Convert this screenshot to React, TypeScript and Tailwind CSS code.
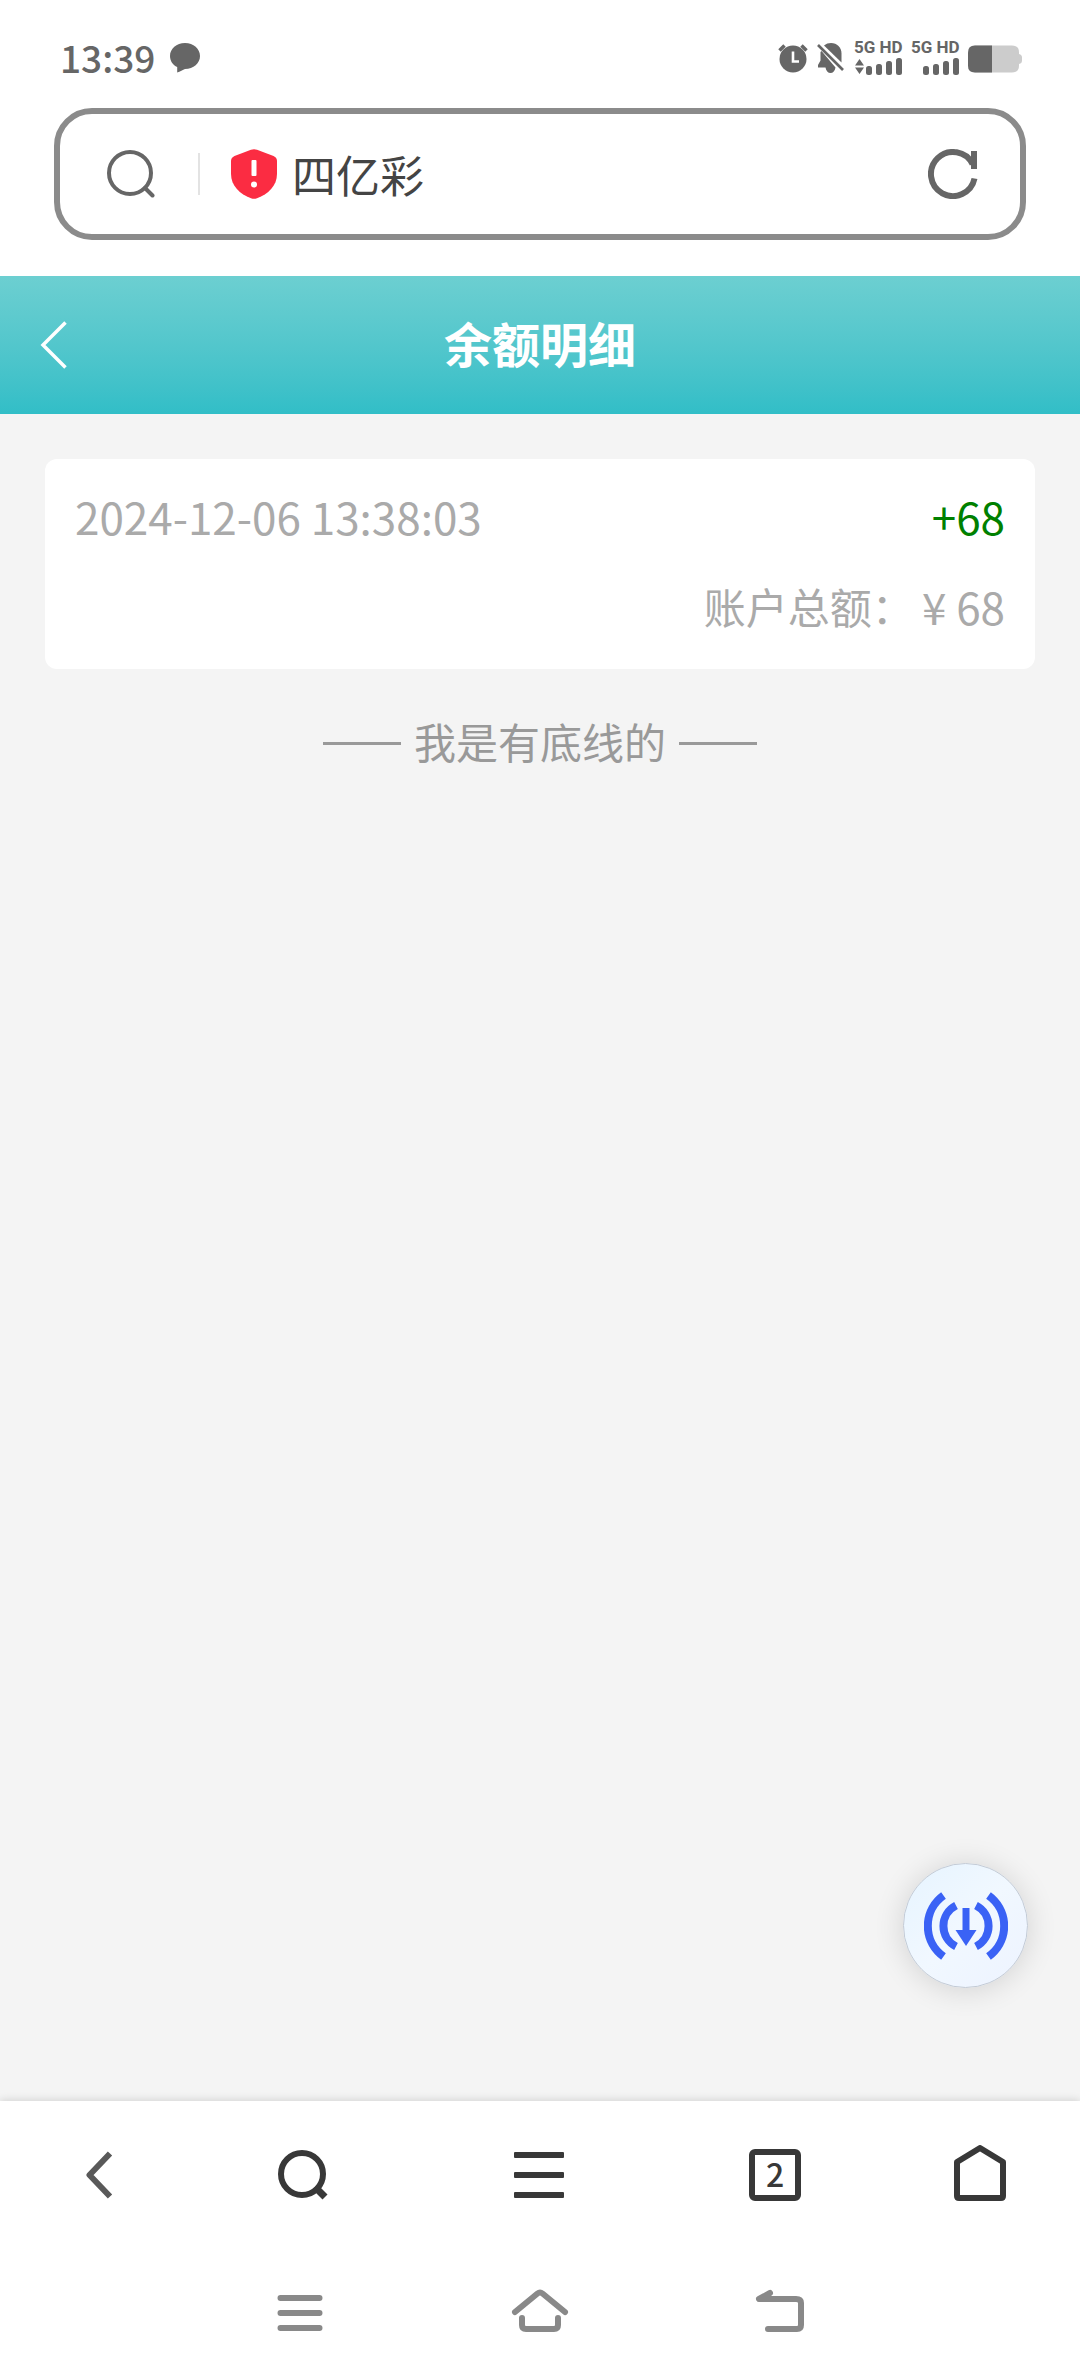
import type { ReactNode } from "react";

interface BalanceRecord {
  id: string;
  createdAt: string;
  amount: number;
  total: number;
}

const RECORDS: BalanceRecord[] = [
  { id: "1", createdAt: "2024-12-06 13:38:03", amount: 68, total: 68 },
];

export default function App() {
  return (
    <div
      lang="zh-CN"
      className="flex min-h-screen flex-col bg-white font-['Noto_Sans_CJK_SC',sans-serif]"
    >
      <StatusBar />
      <AddressBar title="四亿彩" />
      <PageHeader title="余额明细" />

      <main className="relative flex-1 bg-[#f4f4f4] px-[45px] pt-[45px]">
        <ul className="space-y-6">
          {RECORDS.map((r) => (
            <RecordCard key={r.id} record={r} />
          ))}
        </ul>
        <div className="mt-10 flex items-center justify-center gap-[13px] text-[42px] leading-[64px] text-[#999]">
          <span className="h-[3px] w-[78px] bg-[#999]" />
          <p className="pb-1">我是有底线的</p>
          <span className="h-[3px] w-[78px] bg-[#999]" />
        </div>
        <FloatingButton />
      </main>

      <BrowserToolbar tabs={2} />
      <SystemNav />
    </div>
  );
}

function StatusBar() {
  return (
    <div className="flex h-[108px] items-center justify-between pt-2 pr-[58px] pl-[60px] text-[#666]">
      <div className="flex items-center gap-[15px]">
        <span className="pb-0.5 text-[37px] leading-none font-medium">13:39</span>
        <svg className="h-[30px] w-[30px]" viewBox="0 0 30 30" fill="currentColor">
          <path d="M15 0C23.500 0 30 5.700 30 13C30 20.300 23.500 26 15 26C13 27 10 28.500 7.200 29.500V24C3 22 0 18 0 13C0 5.700 6.500 0 15 0Z" />
        </svg>
      </div>

      <div className="flex items-center gap-[9px]">
        <svg className="h-[30px] w-[30px]" viewBox="0 0 30 30" fill="currentColor">
          <circle cx="15" cy="16" r="13.500" />
          <path d="M1.500 7.500L6.500 2.500M28.500 7.500L23.500 2.500" stroke="currentColor" strokeWidth="3.500" fill="none" />
          <path d="M15 8.500V18.500H21" stroke="#fff" strokeWidth="2.600" fill="none" />
        </svg>
        <svg className="h-[30px] w-[28px]" viewBox="0 0 28 30" fill="currentColor">
          <path d="M7 2.500C9 .8 11.500 0 14 0C20 0 24.500 4.500 24.500 10.500V19.500Z" />
          <path d="M3.500 9V17.500L1 22V24.500H8.500C9 28 11 30 13.500 30C16 30 18 28 18.500 24.500L4.500 8Z" />
          <path d="M1 2L26 27" stroke="currentColor" strokeWidth="2.600" />
        </svg>
        <Signal arrows />
        <Signal />
        <svg className="h-[30px] w-[54px]" viewBox="0 -2.500 54 30">
          <path d="M7 0H44Q51 0 51 7V8.500Q54 9 54 12V15Q54 18 51 18.500V20Q51 27 44 27H7Q0 27 0 20V7Q0 0 7 0Z" fill="#ccc" />
          <path d="M24 0H7Q0 0 0 7V20Q0 27 7 27H24Z" fill="#666" />
        </svg>
      </div>
    </div>
  );
}

function Signal({ arrows }: { arrows?: boolean }) {
  return (
    <div className="flex w-[48px] flex-col gap-[3px] pb-0.5">
      <span className="font-[Roboto,sans-serif] text-[17px] leading-[15px] font-bold whitespace-nowrap">5G HD</span>
      <svg className="h-[17px] w-[48px]" viewBox="0 0 48 17" fill="currentColor">
        {arrows && <path d="M5.500 1L10 7.500H1ZM5.500 16L10 9.500H1Z" />}
        <rect x="12" y="8" width="6" height="9" rx="2.500" />
        <rect x="22" y="6" width="6" height="11" rx="2.500" />
        <rect x="32" y="3" width="6" height="14" rx="2.500" />
        <rect x="42" y="0" width="6" height="17" rx="2.500" />
      </svg>
    </div>
  );
}

function AddressBar({ title }: { title: string }) {
  return (
    <div className="mx-[54px] flex h-[132px] items-center rounded-[38px] border-[6px] border-[#8b8b8b] pr-[42px] pl-[47px]">
      <svg className="h-[48px] w-[48px]" viewBox="0 0 48 48" fill="none" stroke="#666" strokeWidth="4">
        <circle cx="23" cy="23" r="21" />
        <path d="M38 38L45.500 45.500" strokeLinecap="round" />
      </svg>
      <span className="ml-[43px] h-[42px] w-[2px] bg-[#e3e3e3]" />
      <svg className="ml-[31px] h-[50px] w-[46px]" viewBox="0 0 46 50">
        <path
          d="M20 .8Q23 -.3 26 .8L42.500 7Q46 8.500 46 12V25C46 37 37 45 26 49.300Q23 50.400 20 49.300C9 45 0 37 0 25V12Q0 8.500 3.500 7Z"
          fill="#fb2c42"
        />
        <rect x="20.500" y="11" width="5" height="16" rx="1" fill="#fff" />
        <circle cx="23" cy="35.500" r="3" fill="#fff" />
      </svg>
      <input
        type="text"
        aria-label="网址"
        defaultValue={title}
        className="ml-[15px] h-[64px] min-w-0 flex-1 bg-transparent text-[44px] leading-[64px] text-[#444] outline-none"
      />
      <button type="button" aria-label="刷新">
        <svg className="h-[50px] w-[50px]" viewBox="0 0 50 50" fill="none" stroke="#666" strokeWidth="6">
          <path d="M46.500 29.500A22 22 0 1 1 44.600 15.100" />
          <path d="M46 2V20" />
        </svg>
      </button>
    </div>
  );
}

function PageHeader({ title }: { title: string }) {
  return (
    <header className="mt-9 grid h-[138px] grid-cols-[1fr_auto_1fr] items-center bg-linear-to-b from-[#6ccfd1] to-[#31bec7] px-10">
      <button type="button" aria-label="返回" className="justify-self-start">
        <svg className="h-[48px] w-[28px]" viewBox="0 0 28 48" fill="none" stroke="#fff" strokeWidth="3.500">
          <path d="M25.500 1.500L3 24L25.500 46.500" />
        </svg>
      </button>
      <h1 className="pb-1.5 text-[48px] leading-[72px] font-bold text-white">{title}</h1>
    </header>
  );
}

function RecordCard({ record }: { record: BalanceRecord }) {
  return (
    <li className="rounded-xl bg-white px-[30px] pt-3 pb-[18px] text-[44px] leading-[90px] text-[#aaa]">
      <div className="flex justify-between">
        <time>{record.createdAt}</time>
        <span className="text-[#008000]">+{record.amount}</span>
      </div>
      <div className="flex h-[90px] justify-end gap-2">
        <span className="text-[42px]">账户总额：</span>
        <span>¥ {record.total}</span>
      </div>
    </li>
  );
}

function FloatingButton() {
  return (
    <button
      type="button"
      aria-label="下载"
      className="absolute right-[52px] bottom-[113px] flex h-[125px] w-[125px] items-center justify-center rounded-full border border-[#c3cbd6] bg-linear-to-br from-[#e6f4ff] via-[#f1f8ff] to-[#edf3ff] shadow-[0_2px_30px_rgba(0,0,0,0.14)]"
    >
      <svg className="h-[68px] w-[84px]" viewBox="0 0 84 68" fill="none" stroke="#3a62f5" strokeWidth="8">
        <path d="M19.500 3.500A37.500 37.500 0 0 0 19.500 64.500" />
        <path d="M64.500 3.500A37.500 37.500 0 0 1 64.500 64.500" />
        <path d="M32 13.500A23 23 0 0 0 32 54.500" />
        <path d="M52 13.500A23 23 0 0 1 52 54.500" />
        <path d="M42 16V42" strokeWidth="7" />
        <path d="M31.500 38H52.500L42 54Z" fill="#3a62f5" stroke="none" />
      </svg>
    </button>
  );
}

function ToolButton({ label, children }: { label: string; children: ReactNode }) {
  return (
    <button type="button" aria-label={label} className="flex h-full items-center justify-center">
      {children}
    </button>
  );
}

function BrowserToolbar({ tabs }: { tabs: number }) {
  return (
    <nav className="relative grid h-[148px] grid-cols-[198fr_210fr_262fr_210fr_200fr] bg-white text-[#383838] shadow-[0_-1px_8px_rgba(0,0,0,0.14)]">
      <ToolButton label="后退">
        <svg className="h-[50px] w-[28px]" viewBox="0 0 28 50" fill="none" stroke="#595959" strokeWidth="6">
          <path d="M25 3.500L4.500 25L25 46.500" strokeLinejoin="round" />
        </svg>
      </ToolButton>
      <ToolButton label="搜索">
        <svg className="h-[50px] w-[50px]" viewBox="0 0 50 50" fill="none" stroke="currentColor" strokeWidth="6">
          <circle cx="24" cy="24" r="21" />
          <path d="M37 37L47 47" strokeWidth="7" />
        </svg>
      </ToolButton>
      <ToolButton label="菜单">
        <svg className="h-[46px] w-[50px]" viewBox="0 0 50 46" fill="currentColor">
          <rect width="50" height="6" rx="1" />
          <rect y="20" width="50" height="6" rx="1" />
          <rect y="40" width="50" height="6" rx="1" />
        </svg>
      </ToolButton>
      <button
        type="button"
        className="flex h-[52px] w-[52px] items-center justify-center place-self-center rounded-md border-[6px] border-[#383838] pb-1 text-[32px] leading-[36px] font-medium"
      >
        {tabs}
      </button>
      <ToolButton label="主页">
        <svg className="mb-1 h-[56px] w-[52px]" viewBox="0 0 52 56" fill="none" stroke="currentColor" strokeWidth="6" strokeLinejoin="round">
          <path d="M26 3L49 17V51Q49 53 47 53H5Q3 53 3 51V17Z" />
        </svg>
      </ToolButton>
    </nav>
  );
}

function SystemNav() {
  return (
    <nav className="relative bg-white text-[#898989]">
      <div className="mx-auto grid h-[127px] w-2/3 grid-cols-3">
        <ToolButton label="最近任务">
          <svg className="h-[44px] w-[56px]" viewBox="0 0 56 44" stroke="currentColor" strokeWidth="6" strokeLinecap="round">
            <path d="M8.500 7H47.500M8.500 22H47.500M8.500 37H47.500" />
          </svg>
        </ToolButton>
        <ToolButton label="桌面">
          <svg className="mb-1 h-[44px] w-[58px]" viewBox="0 0 58 44" fill="none" stroke="currentColor" strokeWidth="6" strokeLinecap="round" strokeLinejoin="round">
            <path d="M4 23L26.500 4.500Q29 2.500 31.500 4.500L54 23" />
            <path d="M11 29V36Q11 40 15 40H43Q47 40 47 36V29" />
          </svg>
        </ToolButton>
        <ToolButton label="返回上级">
          <svg className="mb-1 h-[44px] w-[50px]" viewBox="0 0 50 44" fill="none" stroke="currentColor" strokeWidth="6" strokeLinecap="round" strokeLinejoin="round">
            <path d="M15 4L4 10H41Q46 10 46 14V36Q46 40 42 40H13" />
          </svg>
        </ToolButton>
      </div>
    </nav>
  );
}
